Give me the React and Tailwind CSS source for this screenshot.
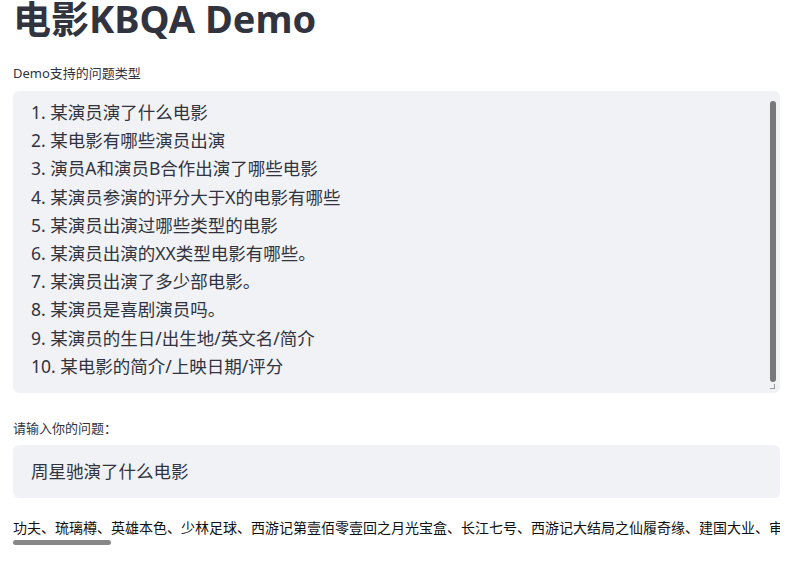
const questions = [
  "1. 某演员演了什么电影",
  "2. 某电影有哪些演员出演",
  "3. 演员A和演员B合作出演了哪些电影",
  "4. 某演员参演的评分大于X的电影有哪些",
  "5. 某演员出演过哪些类型的电影",
  "6. 某演员出演的XX类型电影有哪些。",
  "7. 某演员出演了多少部电影。",
  "8. 某演员是喜剧演员吗。",
  "9. 某演员的生日/出生地/英文名/简介",
  "10. 某电影的简介/上映日期/评分",
];

const answer =
  "功夫、琉璃樽、英雄本色、少林足球、西游记第壹佰零壹回之月光宝盒、长江七号、西游记大结局之仙履奇缘、建国大业、审死官、喜剧之王、食神、大话西游之大圣娶亲、国产凌凌漆、唐伯虎点秋香、九品芝麻官";

const font = { fontFamily: '"Noto Sans", "Noto Sans CJK SC", sans-serif' };

export default function App() {
  return (
    <div className="w-[795px] h-[566px] overflow-hidden bg-white text-[#31333f] px-[13px] pr-[15px]" style={font}>
      <h1 className="text-[38px] font-bold leading-[40px] -mt-[2px]">电影KBQA Demo</h1>

      <div className="mt-[27px] text-[13px] leading-[16px]">Demo支持的问题类型</div>
      <div className="mt-[10px] h-[302px] bg-[#f0f2f6] rounded-[6px] flex">
        <div className="flex-1 pl-[18px] pt-[7px] text-[17.5px] leading-[28.2px]">
          {questions.map((q) => (
            <div key={q}>{q}</div>
          ))}
        </div>
        <div className="w-[10px] flex flex-col items-start pt-[10px] pb-[4px]">
          <div className="w-[6px] flex-1 rounded-full bg-[#787878]"></div>
          <div className="mt-[2px] w-[5px] h-[5px] border-r border-b border-[#999]"></div>
        </div>
      </div>

      <div className="mt-[27px] text-[13px] leading-[16px]">请输入你的问题：</div>
      <div className="mt-[9px] h-[53px] bg-[#f0f2f6] rounded-[6px] flex items-center pl-[18px] text-[17.5px]">
        周星驰演了什么电影
      </div>

      <div className="mt-[20px] overflow-hidden">
        <div className="whitespace-nowrap text-[14px] leading-[18px] text-[#111]" style={{ fontFamily: '"Noto Sans CJK SC", sans-serif' }}>
          {answer}
        </div>
        <div className="mt-[4px] h-[5px] w-[98px] rounded-full bg-[#888]"></div>
      </div>
    </div>
  );
}
